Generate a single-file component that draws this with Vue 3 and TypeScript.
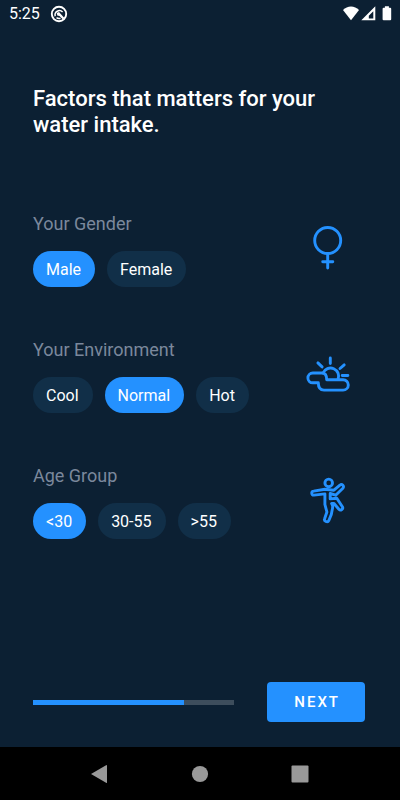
<script setup lang="ts">
import { reactive } from 'vue'

interface Group {
  key: string
  title: string
  icon: 'gender' | 'weather' | 'activity'
  options: string[]
}

const groups: Group[] = [
  { key: 'gender', title: 'Your Gender', icon: 'gender', options: ['Male', 'Female'] },
  { key: 'environment', title: 'Your Environment', icon: 'weather', options: ['Cool', 'Normal', 'Hot'] },
  { key: 'age', title: 'Age Group', icon: 'activity', options: ['<30', '30-55', '>55'] },
]

const selected = reactive<Record<string, string>>({
  gender: 'Male',
  environment: 'Normal',
  age: '<30',
})

const progress = 75
</script>

<template>
  <div class="screen">
    <header class="status">
      <span class="clock">5:25</span>
      <svg class="status-app" viewBox="0 0 18 18" aria-hidden="true">
        <circle cx="9" cy="9" r="7.2" fill="none" stroke="#fff" stroke-width="1.9" />
        <path d="M5.200 11.200A4.400 4.400 0 0 1 12.600 7M6.500 12.700A4.600 4.600 0 0 0 10.500 13.300" fill="none" stroke="#fff" stroke-width="1.500" />
        <path d="M6.800 8 9 7l5.400 6-1.500 1.500-3.400-3.500-2.200-.6z" fill="#fff" />
      </svg>
      <div class="status-icons">
        <svg class="wifi" viewBox="0 0 18 16" aria-hidden="true">
          <path d="M8 14.300 0 4C2.200 1.700 5 .5 8 .5s5.800 1.200 8 3.500z" fill="#fff" />
        </svg>
        <svg class="signal" viewBox="0 0 16 16" aria-hidden="true">
          <path d="M14.300.3v14H.3zM12.300 5.200 7.800 9.700V12.500h4.500z" fill="#fff" fill-rule="evenodd" />
        </svg>
        <svg class="battery" viewBox="0 0 10 16" aria-hidden="true">
          <path d="M2.900.3h4v1.500h1.300q1 0 1 1V13.300q0 1-1 1h-6.600q-1 0-1-1V2.800q0-1 1-1h1.300z" fill="#fff" />
        </svg>
      </div>
    </header>

    <main class="content">
      <h1>Factors that matters for your water intake.</h1>

      <div class="groups">
        <section
          v-for="group in groups"
          :key="group.key"
          class="group"
          role="radiogroup"
          :aria-labelledby="group.key + '-title'"
        >
          <div class="choices">
            <h2 :id="group.key + '-title'">{{ group.title }}</h2>
            <div class="chips">
              <label v-for="option in group.options" :key="option" class="chip">
                <input v-model="selected[group.key]" type="radio" :name="group.key" :value="option" />
                <span>{{ option }}</span>
              </label>
            </div>
          </div>
          <svg class="icon" viewBox="0 0 44 44" aria-hidden="true">
            <g v-if="group.icon === 'gender'">
              <circle cx="21.700" cy="14.500" r="13" />
              <path d="M21.700 27.500V42M16.700 35.700H26.800" />
            </g>
            <g v-else-if="group.icon === 'weather'" transform="translate(0 1)">
              <path d="M24.300 5v5.500M11.900 9.900l4.200 4M38.200 11.900l-4.200 3.600M36.200 22.500h5.700" />
              <path d="M17 20A8 8 0 1 1 32 26.500" />
              <path d="M12.300 29.800H6.800a4.900 4.900 0 0 1 0-9.800H16q4.700 0 4.700 6.700H37.100a5.200 5.200 0 0 1 0 10.400H18q-5.700 0-5.700-7.300z" />
            </g>
            <g v-else>
              <circle cx="22.700" cy="4.900" r="3.800" />
              <path d="M18.900 11.200 7.600 13.100a2 2 0 0 0 .4 4L18.900 15.900V26.500L20.900 34 18.700 40.500a2.100 2.100 0 0 0 4.200 1.900Q26.400 35.500 26.700 28L25.600 25.500H28L32.900 31.300a2.200 2.200 0 0 0 3.500-2.600L30.800 20.200 24.200 20.900V15.500L29.700 17.200 36.900 10.200a2.100 2.100 0 0 0-3-3L27.900 12.200z" />
            </g>
          </svg>
        </section>
      </div>

      <footer class="actions">
        <div class="track" role="progressbar" aria-label="Setup progress" :aria-valuenow="progress" aria-valuemin="0" aria-valuemax="100">
          <div class="fill" :style="{ width: progress + '%' }"></div>
        </div>
        <button class="next" type="button">NEXT</button>
      </footer>
    </main>

    <nav class="navbar" aria-label="System">
      <button type="button" aria-label="Back">
        <svg viewBox="0 0 20 20"><path d="M1 10 16.500 1q.5 0 .5.500v17q0 .5-.5.500z" /></svg>
      </button>
      <button type="button" aria-label="Home">
        <svg viewBox="0 0 20 20"><circle cx="10" cy="10" r="8.100" /></svg>
      </button>
      <button type="button" aria-label="Overview">
        <svg viewBox="0 0 20 20"><rect x="1.500" y="1.500" width="17" height="17" rx="1" /></svg>
      </button>
    </nav>
  </div>
</template>

<style>
body {
  background: #0c2033;
}
</style>

<style scoped>
.screen {
  box-sizing: border-box;
  min-height: 100vh;
  display: flex;
  flex-direction: column;
  background: #0c2033;
  color: #fff;
  font-family: Roboto, "Liberation Sans", sans-serif;
}

.status {
  display: flex;
  align-items: center;
  padding: 0 8px 0 9px;
}

.clock {
  font-size: 16px;
  line-height: 28px;
}

.status-app {
  width: 18px;
  height: 18px;
  margin-left: 10px;
}

.status-icons {
  display: flex;
  align-items: center;
  margin-left: auto;
}

.wifi {
  width: 18px;
  height: 16px;
}

.signal {
  width: 16px;
  height: 16px;
  margin-right: 5px;
}

.battery {
  width: 10px;
  height: 16px;
}

.content {
  flex: 1;
  display: flex;
  flex-direction: column;
  padding: 58px 35px 25px 33px;
}

h1 {
  margin: 0;
  font-size: 22px;
  line-height: 26px;
  font-weight: 500;
}

.groups {
  display: flex;
  flex-direction: column;
  gap: 52px;
  margin-top: 75px;
}

.group {
  display: flex;
  align-items: center;
  justify-content: space-between;
}

h2 {
  margin: 0 0 16px;
  font-size: 18px;
  line-height: 22px;
  font-weight: 400;
  color: #7b889c;
}

.chips {
  display: flex;
  gap: 12px;
}

.chip {
  position: relative;
  cursor: pointer;
}

.chip input {
  position: absolute;
  inset: 0;
  margin: 0;
  opacity: 0;
}

.chip span {
  display: block;
  padding: 1px 14px 0 13px;
  border-radius: 18px;
  background: #112f48;
  font-size: 16px;
  line-height: 35px;
}

.chip input:checked + span {
  background: #2491ff;
}

.icon {
  width: 44px;
  height: 44px;
  margin: 0 15px 4px 0;
  overflow: visible;
  fill: none;
  stroke: #2491ff;
  stroke-width: 2.900;
  stroke-linecap: round;
  stroke-linejoin: round;
}

.actions {
  display: flex;
  align-items: center;
  gap: 33px;
  margin-top: auto;
}

.track {
  flex: 1;
  height: 5px;
  background: #3d4d5c;
}

.fill {
  height: 100%;
  background: #2491ff;
}

.next {
  height: 40px;
  padding: 0 25px 0 27px;
  border: 0;
  border-radius: 4px;
  background: #2491ff;
  color: #fff;
  font-family: inherit;
  font-size: 15px;
  font-weight: 500;
  letter-spacing: 2px;
}

.navbar {
  height: 53px;
  display: flex;
  align-items: center;
  justify-content: center;
  gap: 80px;
  background: #000;
}

.navbar button {
  width: 20px;
  height: 20px;
  padding: 0;
  border: 0;
  background: none;
}

.navbar svg {
  display: block;
  width: 20px;
  height: 20px;
  fill: #999;
}
</style>
